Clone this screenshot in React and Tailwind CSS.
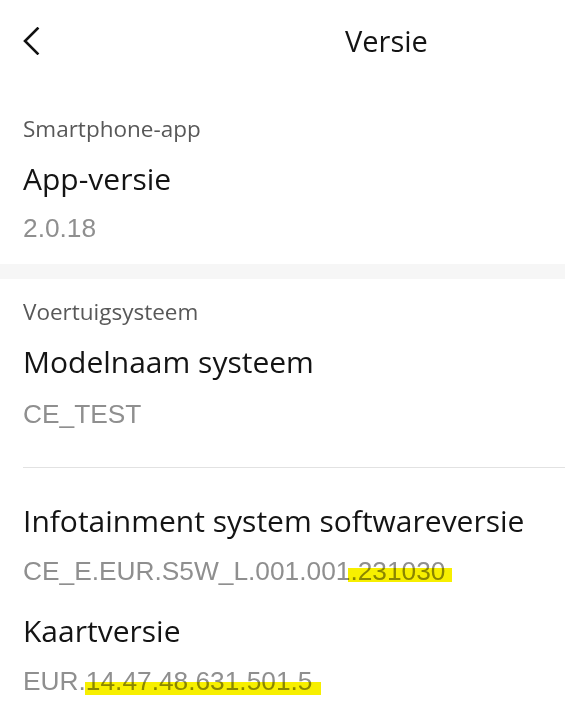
import React from 'react';

const sans = "font-['Open_Sans','Liberation_Sans',sans-serif]";
const mono = "font-['Liberation_Sans',Arial,sans-serif]";

function Marker({ children, className }) {
  return (
    <span className="relative">
      <span className={`absolute bg-[#f7ef00] mix-blend-multiply ${className}`} />
      {children}
    </span>
  );
}

function Item({ label, title, value, gap }) {
  return (
    <div>
      <div className={`${sans} text-[22.5px] leading-[30px] text-[#585858] mb-[15px]`}>{label}</div>
      <div className={`${sans} text-[30px] leading-[40px] text-[#141414]`}>{title}</div>
      <div className={`${mono} text-[26.3px] leading-[32px] text-[#8f8f8f] ${gap}`}>{value}</div>
    </div>
  );
}

export default function App() {
  return (
    <div className="w-[565px] h-[709px] overflow-hidden bg-white">
      <header className="flex h-[114px] pt-[27px]">
        <svg className="ml-[22px] w-[18px] h-[28px]" viewBox="0 0 18 28" fill="none">
          <polyline points="15.5,1.5 3,14 15.5,26.5" stroke="#111" strokeWidth="2.6" strokeLinecap="square" />
        </svg>
        <h1 className={`${sans} ml-[305px] text-[29px] leading-[24px] h-[24px] mt-[2px] text-[#141414] font-normal`}>Versie</h1>
      </header>

      <section className="pl-[23px] pb-[20px]">
        <Item label="Smartphone-app" title="App-versie" value="2.0.18" gap="mt-[13px]" />
      </section>

      <div className="h-[15px] bg-[#f6f6f6]" />

      <section className="pl-[23px] pt-[18px]">
        <div className="border-b border-[#e2e2e2] pb-[37px]">
          <Item label="Voertuigsysteem" title="Modelnaam systeem" value="CE_TEST" gap="mt-[16px]" />
        </div>
        <div className="pt-[33px]">
          <div>
            <div className={`${sans} text-[30px] leading-[40px] text-[#141414]`}>Infotainment system softwareversie</div>
            <div className={`${mono} text-[26.3px] leading-[32px] text-[#8f8f8f] mt-[14px]`}>
              CE_E.EUR.S5W_L.001.001
              <Marker className="-left-[2px] -right-[6px] top-[12px] h-[14px]">.231030</Marker>
            </div>
          </div>
          <div className="mt-[24px]">
            <div className={`${sans} text-[30px] leading-[40px] text-[#141414]`}>Kaartversie</div>
            <div className={`${mono} text-[26.3px] leading-[32px] text-[#8f8f8f] mt-[14px]`}>
              EUR.
              <Marker className="-left-[1px] -right-[8px] top-[16px] h-[13px]">14.47.48.631.501.5</Marker>
            </div>
          </div>
        </div>
      </section>
    </div>
  );
}
